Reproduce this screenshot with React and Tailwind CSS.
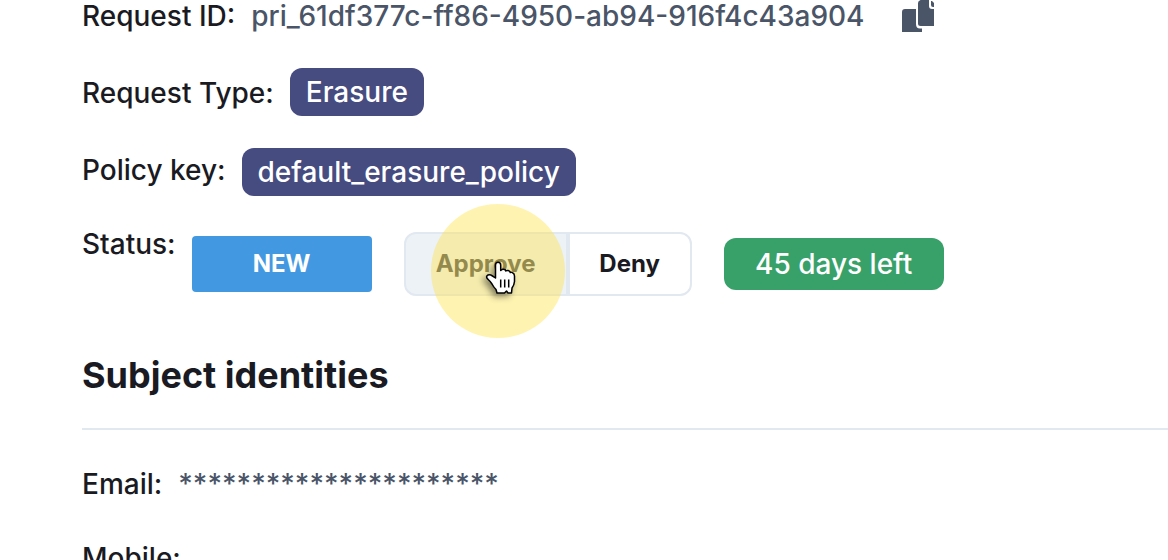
function CopyIcon() {
  return (
    <svg viewBox="0 0 32 32" className="size-8" aria-hidden="true">
      <path fill="#4a5568" d="M3 9H14V24Q14 28.500 18 28.500H20V32H0V12Q0 9 3 9Z" />
      <path fill="#4a5568" d="M18.500 0H27V6Q27 9 30 9H32V26H18.500Q16 26 16 23.500V3Q16 1 18.500 0Z" />
      <path fill="#4a5568" d="M29 1H30L32 3V7H31Q29 7 29 5Z" />
    </svg>
  );
}

function HandPointer() {
  return (
    <svg viewBox="0 0 32 34" className="h-[34px] w-8 overflow-visible drop-shadow-[-3px_3px_3px_rgba(0,0,0,0.45)]" aria-hidden="true">
      <path
        d="M10.500 17V4Q10.500 1.200 13 1.200Q15.700 1.200 15.700 4V9.500Q16.500 8.300 18.300 8.300Q20.500 8.300 20.700 10Q21.700 9.300 23.200 9.500Q25 10 25.300 11.500Q26.200 11 27.500 11.700Q29.500 12.500 29.500 15V20.500Q29.200 24 27 27L26.500 32H23L21.500 30L19.500 32H12L11 28.500Q8.500 26 7 23Q5.500 20.500 3.200 18.500Q1 16.500 1.800 15Q4 12.700 7.500 15Z"
        fill="#fff"
        stroke="#000"
        strokeWidth="1.500"
        strokeLinejoin="round"
      />
      <path d="M15.700 18.500V26.500M19.700 18.500V26.500M23.700 18.500V26.500" stroke="#000" strokeWidth="1.500" />
    </svg>
  );
}

function Badge({ children }) {
  return <span className="rounded-xl bg-[#464b80] px-4 leading-12 text-white">{children}</span>;
}

export default function App() {
  return (
    <main className="h-screen overflow-hidden bg-white pl-[82px] font-['Inter',sans-serif] text-[28px] leading-8 font-medium text-[#1a1a23]">
      <section>
        <div className="flex gap-4">
          <span>Request ID:</span>
          <span className="text-[#4a5568]">pri_61df377c-ff86-4950-ab94-916f4c43a904</span>
          <button type="button" aria-label="Copy request ID" className="ml-[22px] size-8">
            <CopyIcon />
          </button>
        </div>
        <div className="mt-9 flex items-start gap-4">
          <span className="pt-[9px]">Request Type:</span>
          <Badge>Erasure</Badge>
        </div>
        <div className="mt-8 flex items-start gap-4">
          <span className="pt-1.5">Policy key:</span>
          <Badge>default_erasure_policy</Badge>
        </div>
        <div className="mt-8 flex items-start gap-4">
          <span>Status:</span>
          <div className="flex items-center gap-8 pt-1">
            <span className="w-[180px] rounded-sm bg-[#4299e1] text-center text-2xl leading-14 font-bold text-white">NEW</span>
            <div className="flex h-16 text-2xl font-bold">
              <button type="button" className="relative w-[164px] rounded-l-xl border-2 border-[#e2e8f0] bg-[#edf2f7] text-[#4d5058]">
                Approve
                <span className="pointer-events-none absolute -top-[30px] left-[25px] z-10 size-[134px] rounded-full bg-[#ffe03f]/40" />
                <span className="pointer-events-none absolute top-[27px] left-[79px] z-20">
                  <HandPointer />
                </span>
              </button>
              <button type="button" className="w-[124px] rounded-r-xl border-2 border-[#e2e8f0] bg-white">
                Deny
              </button>
            </div>
            <span className="w-[220px] rounded-xl bg-[#38a169] text-center leading-[52px] text-white">45 days left</span>
          </div>
        </div>
      </section>
      <section className="mt-14">
        <h2 className="border-b-2 border-[#e2e8f0] pb-[30px] text-4xl leading-[46px] font-bold">Subject identities</h2>
        <div className="mt-[38px] flex gap-4">
          <span>Email:</span>
          <span className="text-[#4a5568]">**********************</span>
        </div>
        <div className="mt-[42px]">Mobile:</div>
      </section>
    </main>
  );
}
